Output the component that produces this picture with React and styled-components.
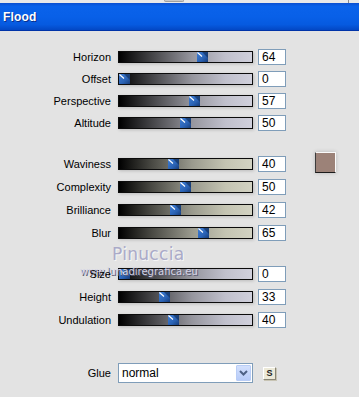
import React from "react";
import styled, { createGlobalStyle } from "styled-components";

const Global = createGlobalStyle`
  html, body { margin: 0; padding: 0; background: #e3e3e3; }
  body { font-family: "Liberation Sans", Arial, sans-serif; }
`;

const Window = styled.div`
  position: relative;
  width: 359px;
  height: 397px;
  overflow: hidden;
  background: #e3e3e3;
  font-family: "Liberation Sans", Arial, sans-serif;
`;

const TopStrip = styled.div`
  height: 3px;
  background: #e9e9e9;
  display: flex;
  align-items: flex-start;
`;

const StripTab = styled.div`
  margin-left: 164px;
  width: 20px;
  height: 2px;
  background: #c8c8c8;
  border: 1px solid #a0a0a0;
  border-top: none;
  border-radius: 0 0 3px 3px;
  box-sizing: border-box;
`;

const StripEdge = styled.div`
  margin-left: auto;
  margin-right: 10px;
  width: 1px;
  height: 3px;
  background: #8a8a8a;
`;

const TitleBar = styled.div`
  height: 28px;
  box-sizing: border-box;
  padding: 0 0 0 3px;
  display: flex;
  align-items: center;
  color: #fff;
  font-weight: bold;
  font-size: 12px;
  font-family: "Liberation Sans", Arial, sans-serif;
  letter-spacing: 0.2px;
  text-shadow: 1px 1px 0 #0a2f8a;
  background: linear-gradient(
    #0b4fd0 0%,
    #0a62ea 12%,
    #0860e8 50%,
    #065ae0 80%,
    #0347c4 100%
  );
  border-bottom: 1px solid #0033a8;
`;

const Body = styled.div`
  padding-top: 15px;
  display: flex;
  flex-direction: column;
`;

const Group = styled.div`
  display: flex;
  flex-direction: column;
  margin-bottom: ${(p) => p.$after}px;
`;

const Row = styled.div`
  display: flex;
  align-items: center;
  height: ${(p) => p.$h}px;
`;

const Label = styled.div`
  width: 111px;
  text-align: right;
  font-size: 11px;
  color: #000;
  white-space: nowrap;
  position: relative;
  z-index: 2;
`;

const Track = styled.div`
  position: relative;
  margin-left: 7px;
  width: 135px;
  height: 12px;
  box-sizing: border-box;
  border: 1px solid #0c0c0c;
  box-shadow: 1px 1px 3px rgba(0, 0, 0, 0.18);
  background: ${(p) =>
    p.$tone === "sand"
      ? "linear-gradient(to right, #000 0%, #4a4a44 25%, #9a9a8e 55%, #c4c4b2 80%, #d2d2c2 100%)"
      : "linear-gradient(to right, #000 0%, #454548 25%, #96969e 55%, #c0c0cc 80%, #d0d0dc 100%)"};
`;

const ThumbWrap = styled.div`
  position: absolute;
  top: 0;
  width: 11px;
  height: 10px;
  display: flex;
`;

const ValueBox = styled.div`
  margin-left: 5px;
  width: 28px;
  height: 16px;
  box-sizing: border-box;
  border: 1px solid #7f9db9;
  background: #fff;
  font-size: 12px;
  line-height: 14px;
  padding-left: 3px;
  color: #000;
`;

const Swatch = styled.div`
  margin-left: 29px;
  align-self: flex-start;
  margin-top: 0px;
  width: 21px;
  height: 21px;
  box-sizing: border-box;
  background: #9c8278;
  border-top: 1px solid #fafafa;
  border-right: 1px solid #fafafa;
  border-left: 1px solid #3c3c3c;
  border-bottom: 1px solid #1c1c1c;
  box-shadow: 0 0 4px rgba(0, 0, 0, 0.2);
`;

const Select = styled.div`
  margin-left: 7px;
  width: 135px;
  height: 20px;
  box-sizing: border-box;
  border: 1px solid #7f9db9;
  background: #fff;
  display: flex;
  align-items: center;
  padding-left: 3px;
  font-size: 12px;
  color: #000;
`;

const SelectText = styled.span`
  flex: 1;
`;

const DropBtn = styled.div`
  width: 15px;
  height: 16px;
  margin-right: 1px;
  background: linear-gradient(#d3e0fd, #b7cbf8);
  border: 1px solid #b9cdf6;
  box-sizing: border-box;
  border-radius: 1px;
  display: flex;
  align-items: center;
  justify-content: center;
`;

const SmallBtn = styled.div`
  margin-left: 10px;
  width: 13px;
  height: 13px;
  box-sizing: border-box;
  background: #ece9d8;
  border-top: 1px solid #fff;
  border-left: 1px solid #fff;
  border-right: 1px solid #8a8676;
  border-bottom: 1px solid #8a8676;
  box-shadow: 1px 1px 0 #c8c4b4;
  display: flex;
  align-items: center;
  justify-content: center;
  font-size: 9px;
  font-weight: bold;
  color: #222;
  line-height: 1;
`;

const Watermark = styled.div`
  position: absolute;
  left: 112px;
  top: 244px;
  font-family: "DejaVu Sans", sans-serif;
  font-size: 17px;
  color: #aaaac8;
  letter-spacing: 0.3px;
  text-shadow: 1px 1px 0 rgba(255, 255, 255, 0.7);
  z-index: 1;
  pointer-events: none;
`;

const WatermarkUrl = styled.div`
  position: absolute;
  left: 80px;
  top: 266px;
  font-family: "DejaVu Sans", sans-serif;
  font-size: 10px;
  color: #d4d4e6;
  text-shadow: 1px 1px 0 #5a5a70;
  z-index: 1;
  pointer-events: none;
`;

const Thumb = ({ value }) => (
  <ThumbWrap style={{ left: `${Math.round((value / 100) * 122)}px` }}>
    <svg width="11" height="10" viewBox="0 0 11 10">
      <defs>
        <linearGradient id="tgrad" x1="0" y1="0" x2="1" y2="1">
          <stop offset="0" stopColor="#3f7fd6" />
          <stop offset="0.6" stopColor="#2a62b4" />
          <stop offset="1" stopColor="#173c78" />
        </linearGradient>
      </defs>
      <rect width="11" height="10" fill="url(#tgrad)" />
      <polygon points="5,0 11,0 11,6" fill="#12305e" opacity="0.7" />
      <line x1="0.5" y1="0.5" x2="5" y2="4.5" stroke="#ffffff" strokeWidth="1.2" />
    </svg>
  </ThumbWrap>
);

const Slider = ({ label, value, tone, h, extra }) => (
  <Row $h={h}>
    <Label>{label}</Label>
    <Track $tone={tone}>
      <Thumb value={value} />
    </Track>
    <ValueBox>{value}</ValueBox>
    {extra}
  </Row>
);

const group1 = [
  ["Horizon", 64],
  ["Offset", 0],
  ["Perspective", 57],
  ["Altitude", 50],
];
const group2 = [
  ["Waviness", 40],
  ["Complexity", 50],
  ["Brilliance", 42],
  ["Blur", 65],
];
const group3 = [
  ["Size", 0],
  ["Height", 33],
  ["Undulation", 40],
];

export default function App() {
  return (
    <>
      <Global />
      <Window>
        <TopStrip>
          <StripTab />
          <StripEdge />
        </TopStrip>
        <TitleBar>Flood</TitleBar>
        <Body>
          <Group $after={18}>
            {group1.map(([l, v]) => (
              <Slider key={l} label={l} value={v} tone="steel" h={22} />
            ))}
          </Group>
          <Group $after={18}>
            {group2.map(([l, v], i) => (
              <Slider
                key={l}
                label={l}
                value={v}
                tone="sand"
                h={23}
                extra={i === 0 ? <Swatch /> : null}
              />
            ))}
          </Group>
          <Group $after={31}>
            {group3.map(([l, v]) => (
              <Slider key={l} label={l} value={v} tone="steel" h={23} />
            ))}
          </Group>
          <Row $h={22}>
            <Label>Glue</Label>
            <Select>
              <SelectText>normal</SelectText>
              <DropBtn>
                <svg width="9" height="6" viewBox="0 0 9 6">
                  <polyline
                    points="1,1 4.5,4.5 8,1"
                    fill="none"
                    stroke="#4d6185"
                    strokeWidth="2"
                  />
                </svg>
              </DropBtn>
            </Select>
            <SmallBtn>S</SmallBtn>
          </Row>
        </Body>
        <Watermark>Pinuccia</Watermark>
        <WatermarkUrl>www.lunadiregrafica.eu</WatermarkUrl>
      </Window>
    </>
  );
}
